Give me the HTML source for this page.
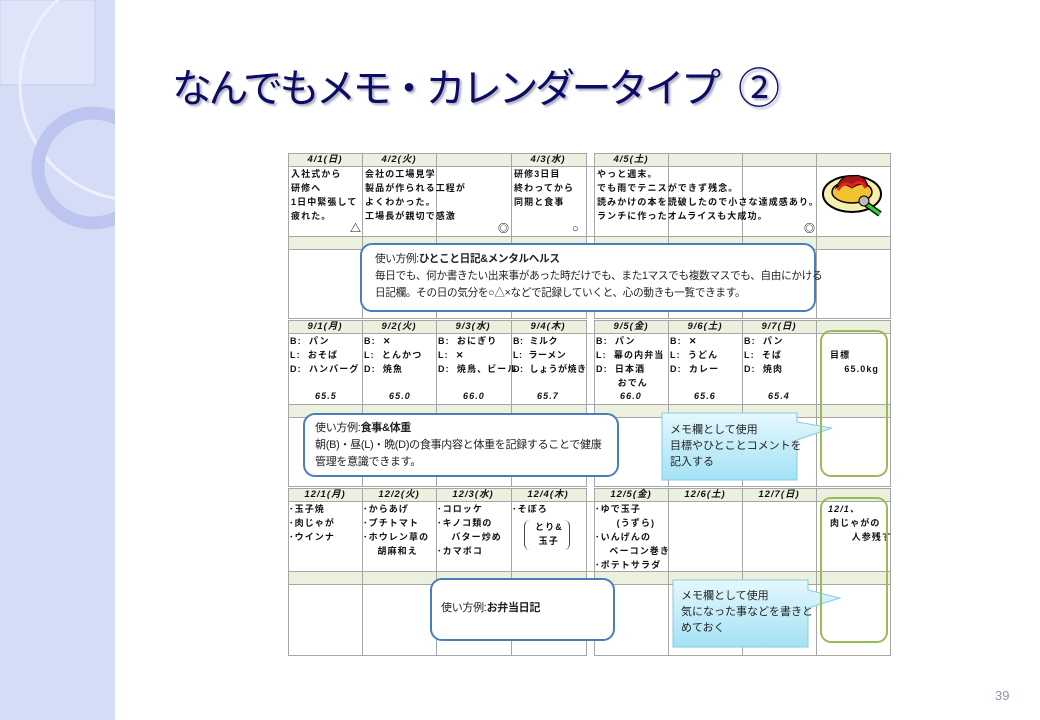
<!DOCTYPE html>
<html><head><meta charset="utf-8">
<style>
body{margin:0;width:1040px;height:720px;overflow:hidden;background:#fff;position:relative;font-family:"Liberation Sans","Noto Sans CJK JP",sans-serif;}
.abs{position:absolute}
.side{left:0;top:0;width:115px;height:720px;background:#d5dcf6;overflow:hidden}
.t{position:absolute;font-family:"Liberation Sans","Noto Sans CJK JP",sans-serif;font-weight:bold;font-size:9px;letter-spacing:1.1px;color:#111;line-height:14px;white-space:pre}
.h{position:absolute;font-weight:bold;font-size:9.5px;font-style:italic;text-align:center;line-height:13px;width:74px;color:#111;letter-spacing:1px}
.call{position:absolute;border:2px solid #4a7ebb;border-radius:12px;background:#fff;font-size:11px;line-height:17px;color:#222;box-sizing:border-box;white-space:nowrap;letter-spacing:-0.3px}
.cyan{position:absolute;font-size:11px;line-height:16px;color:#222;white-space:nowrap}
.gbox{position:absolute;border:2px solid #9bbb59;border-radius:11px;box-sizing:border-box}
</style></head><body>
<div class="abs side">
<svg width="115" height="720">
<rect x="0" y="0" width="95" height="85" fill="#dfe5f9" stroke="#c5cdf0"/>
<circle cx="135" cy="85" r="115" fill="none" stroke="#eef1fc" stroke-width="3"/>
<circle cx="93" cy="168" r="55" fill="none" stroke="#bcc5ee" stroke-width="13"/>
</svg>
</div>
<div class="abs" style="left:172px;top:64px;font-size:40px;letter-spacing:-3.5px;color:#0c0c66;text-shadow:2px 2px 2px #aab;white-space:nowrap;line-height:50px">なんでもメモ・カレンダータイプ</div>
<div class="abs" style="left:738px;top:64px;font-size:42px;color:#0c0c66;text-shadow:2px 2px 2px #aab;line-height:50px">②</div>
<div class="abs" style="left:995px;top:688px;font-size:13px;color:#8a95a8">39</div>

<svg class="abs" style="left:0;top:0" width="1040" height="720">
<g fill="#ebf1de">
<rect x="288" y="153" width="298" height="13"/><rect x="594" y="153" width="296" height="13"/>
<rect x="288" y="236" width="298" height="13"/><rect x="594" y="236" width="296" height="13"/>
<rect x="288" y="320" width="298" height="13"/><rect x="594" y="320" width="296" height="13"/>
<rect x="288" y="404" width="298" height="13"/><rect x="594" y="404" width="296" height="13"/>
<rect x="288" y="488" width="298" height="13"/><rect x="594" y="488" width="296" height="13"/>
<rect x="288" y="571" width="298" height="13"/><rect x="594" y="571" width="296" height="13"/>
</g>
<g stroke="#a6a6a6" stroke-width="1" fill="none">
<rect x="288.5" y="153.5" width="298" height="165"/><rect x="594.5" y="153.5" width="296" height="165"/>
<rect x="288.5" y="320.5" width="298" height="166"/><rect x="594.5" y="320.5" width="296" height="166"/>
<rect x="288.5" y="488.5" width="298" height="167"/><rect x="594.5" y="488.5" width="296" height="167"/>
<path d="M362.5 153V318M436.5 153V318M511.5 153V318M668.5 153V318M742.5 153V318M816.5 153V318"/>
<path d="M362.5 320V486M436.5 320V486M511.5 320V486M668.5 320V486M742.5 320V486M816.5 320V486"/>
<path d="M362.5 488V655M436.5 488V655M511.5 488V655M668.5 488V655M742.5 488V655M816.5 488V655"/>
<path d="M288 166.5H890M288 236.5H890M288 249.5H890M288 333.5H890M288 404.5H890M288 417.5H890M288 501.5H890M288 571.5H890M288 584.5H890"/>
</g>
<g transform="translate(822,168)">
<ellipse cx="30" cy="26" rx="29" ry="18" fill="#f5f0b0" stroke="#000" stroke-width="2"/>
<ellipse cx="30" cy="24" rx="20" ry="11" fill="#f2c230" stroke="#000" stroke-width="1.5"/>
<path d="M14 20 Q20 6 30 8 Q42 5 46 18 Q38 14 30 20 Q22 14 14 20Z" fill="#a01818" stroke="#000"/>
<path d="M16 22 Q22 12 30 18 Q38 10 44 20" fill="none" stroke="#e82020" stroke-width="3"/>
<path d="M44 36 L58 46" stroke="#000" stroke-width="6"/><path d="M44 36 L58 46" stroke="#3c3" stroke-width="3.5"/>
<circle cx="42" cy="33" r="5" fill="#bbb" stroke="#000"/>
</g>
<defs><linearGradient id="cg" x1="0" y1="0" x2="0" y2="1"><stop offset="0" stop-color="#e6f8fd"/><stop offset="1" stop-color="#a3e2f5"/></linearGradient></defs>
<path d="M662 413H797V422L832 428L797 440V480H662Z" fill="url(#cg)" stroke="#86cbe0"/>
<path d="M673 580H808V590L840 598L808 608V647H673Z" fill="url(#cg)" stroke="#86cbe0"/>
</svg>

<div class="h" style="left:288px;top:153px">4/1(日)</div>
<div class="h" style="left:362px;top:153px">4/2(火)</div>
<div class="h" style="left:511px;top:153px">4/3(水)</div>
<div class="h" style="left:594px;top:153px">4/5(土)</div>
<div class="h" style="left:288px;top:320px">9/1(月)</div>
<div class="h" style="left:362px;top:320px">9/2(火)</div>
<div class="h" style="left:436px;top:320px">9/3(水)</div>
<div class="h" style="left:511px;top:320px">9/4(木)</div>
<div class="h" style="left:594px;top:320px">9/5(金)</div>
<div class="h" style="left:668px;top:320px">9/6(土)</div>
<div class="h" style="left:742px;top:320px">9/7(日)</div>
<div class="h" style="left:288px;top:488px">12/1(月)</div>
<div class="h" style="left:362px;top:488px">12/2(火)</div>
<div class="h" style="left:436px;top:488px">12/3(水)</div>
<div class="h" style="left:511px;top:488px">12/4(木)</div>
<div class="h" style="left:594px;top:488px">12/5(金)</div>
<div class="h" style="left:668px;top:488px">12/6(土)</div>
<div class="h" style="left:742px;top:488px">12/7(日)</div>

<div class="t" style="left:291px;top:167px">入社式から
研修へ
1日中緊張して
疲れた。</div>
<div class="t" style="left:365px;top:167px">会社の工場見学
製品が作られる工程が
よくわかった。
工場長が親切で感激</div>
<div class="t" style="left:514px;top:167px">研修3日目
終わってから
同期と食事</div>
<div class="t" style="left:597px;top:167px">やっと週末。
でも雨でテニスができず残念。
読みかけの本を読破したので小さな達成感あり。
ランチに作ったオムライスも大成功。</div>
<div class="t" style="left:350px;top:222px;font-size:11px">△</div>
<div class="t" style="left:498px;top:222px;font-size:11px">◎</div>
<div class="t" style="left:572px;top:222px;font-size:11px">○</div>
<div class="t" style="left:804px;top:222px;font-size:11px">◎</div>

<div class="t" style="left:290px;top:334px">B:  パン
L:  おそば
D:  ハンバーグ</div>
<div class="t" style="left:364px;top:334px">B:  ✕
L:  とんかつ
D:  焼魚</div>
<div class="t" style="left:438px;top:334px">B:  おにぎり
L:  ✕
D:  焼鳥、ビール</div>
<div class="t" style="left:513px;top:334px;letter-spacing:0.5px">B:  ミルク
L:  ラーメン
D:  しょうが焼き</div>
<div class="t" style="left:596px;top:334px">B:  パン
L:  幕の内弁当
D:  日本酒
      おでん</div>
<div class="t" style="left:670px;top:334px">B:  ✕
L:  うどん
D:  カレー</div>
<div class="t" style="left:744px;top:334px">B:  パン
L:  そば
D:  焼肉</div>
<div class="t" style="left:315px;top:389px;font-style:italic">65.5</div>
<div class="t" style="left:389px;top:389px;font-style:italic">65.0</div>
<div class="t" style="left:463px;top:389px;font-style:italic">66.0</div>
<div class="t" style="left:537px;top:389px;font-style:italic">65.7</div>
<div class="t" style="left:620px;top:389px;font-style:italic">66.0</div>
<div class="t" style="left:694px;top:389px;font-style:italic">65.6</div>
<div class="t" style="left:768px;top:389px;font-style:italic">65.4</div>
<div class="t" style="left:830px;top:348px">目標
    65.0kg</div>

<div class="t" style="left:289px;top:502px">･玉子焼
･肉じゃが
･ウインナ</div>
<div class="t" style="left:363px;top:502px">･からあげ
･プチトマト
･ホウレン草の
    胡麻和え</div>
<div class="t" style="left:437px;top:502px">･コロッケ
･キノコ類の
    バター炒め
･カマボコ</div>
<div class="t" style="left:512px;top:502px">･そぼろ</div>
<div class="abs" style="left:524px;top:520px;width:44px;height:30px;border-left:1.5px solid #444;border-right:1.5px solid #444;border-radius:6px"></div>
<div class="t" style="left:535px;top:520px;line-height:14px">とり&amp;
 玉子</div>
<div class="t" style="left:595px;top:502px">･ゆで玉子
      (うずら)
･いんげんの
    ベーコン巻き
･ポテトサラダ</div>
<div class="t" style="left:828px;top:502px;font-style:italic">12/1、</div>
<div class="t" style="left:830px;top:516px">肉じゃがの
      人参残す</div>

<div class="call" style="left:360px;top:243px;width:456px;height:69px;padding:6px 0 0 13px;font-size:10.6px">使い方例:<b>ひとこと日記&amp;メンタルヘルス</b><br>毎日でも、何か書きたい出来事があった時だけでも、また1マスでも複数マスでも、自由にかける<br>日記欄。その日の気分を○△×などで記録していくと、心の動きも一覧できます。</div>
<div class="call" style="left:303px;top:413px;width:316px;height:64px;padding:5px 0 0 10px">使い方例:<b>食事&amp;体重</b><br>朝(B)・昼(L)・晩(D)の食事内容と体重を記録することで健康<br>管理を意識できます。</div>
<div class="call" style="left:430px;top:578px;width:185px;height:63px;padding:20px 0 0 9px">使い方例:<b>お弁当日記</b></div>
<div class="cyan" style="left:670px;top:422px">メモ欄として使用<br>目標やひとことコメントを<br>記入する</div>
<div class="cyan" style="left:681px;top:588px">メモ欄として使用<br>気になった事などを書きと<br>めておく</div>
<div class="gbox" style="left:820px;top:330px;width:68px;height:147px"></div>
<div class="gbox" style="left:820px;top:497px;width:68px;height:146px"></div>
</body></html>
